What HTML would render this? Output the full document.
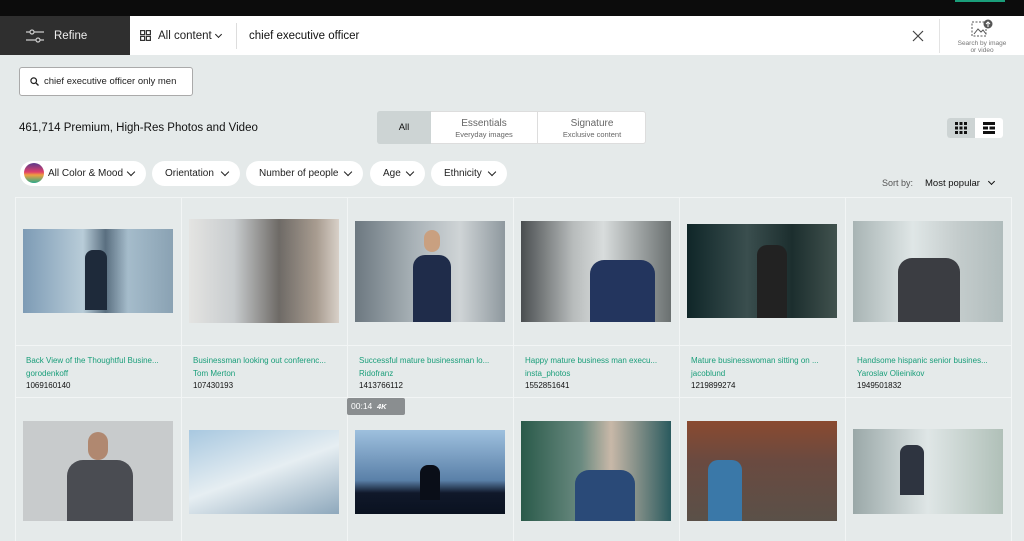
<!DOCTYPE html><html><head><style>
*{margin:0;padding:0;box-sizing:border-box}
body{width:1024px;height:541px;overflow:hidden;background:#e5eaea;font-family:"Liberation Sans",sans-serif;position:relative;color:#111}
.a{position:absolute}
.pill{position:absolute;top:161px;height:25px;background:#fff;border-radius:13px;font-size:10px;line-height:26px;padding-left:13px;color:#222}
.pill:after{content:"";position:absolute;right:12px;top:8px;width:5px;height:5px;border-right:1.5px solid #222;border-bottom:1.5px solid #222;transform:rotate(45deg)}
.t{position:absolute;font-size:8px;color:#1a9e7a;white-space:nowrap}
.n{position:absolute;font-size:8px;color:#111}
.img{position:absolute}
</style></head><body>
<div class="a" style="left:0;top:0;width:1024px;height:16px;background:#0c0c0c"></div>
<div class="a" style="left:955px;top:0;width:50px;height:2px;background:#1a9e7a"></div>
<div class="a" style="left:0;top:16px;width:1024px;height:39px;background:#fff"></div>
<div class="a" style="left:0;top:16px;width:130px;height:39px;background:#2f2f2f"></div>
<svg class="a" style="left:26px;top:29px" width="18" height="14"><g stroke="#ccc" stroke-width="1.2" fill="none"><line x1="0" y1="3" x2="18" y2="3"/><line x1="0" y1="11" x2="18" y2="11"/><circle cx="6" cy="3" r="2" fill="#2f2f2f"/><circle cx="12" cy="11" r="2" fill="#2f2f2f"/></g></svg>
<div class="a" style="left:54px;top:30px;font-size:11.5px;color:#eee">Refine</div>
<svg class="a" style="left:140px;top:30px" width="11" height="11"><g fill="none" stroke="#333" stroke-width="1.2"><rect x="0.6" y="0.6" width="4" height="4"/><rect x="6.4" y="0.6" width="4" height="4"/><rect x="0.6" y="6.4" width="4" height="4"/><rect x="6.4" y="6.4" width="4" height="4"/></g></svg>
<div class="a" style="left:158px;top:30px;font-size:11.5px;color:#222">All content</div>
<div class="a" style="left:216px;top:32px;width:5px;height:5px;border-right:1.3px solid #222;border-bottom:1.3px solid #222;transform:rotate(45deg)"></div>
<div class="a" style="left:236px;top:23px;width:1px;height:26px;background:#ddd"></div>
<div class="a" style="left:249px;top:30px;font-size:11.5px;color:#111">chief executive officer</div>
<svg class="a" style="left:912px;top:30px" width="12" height="12"><path d="M1 1L11 11M11 1L1 11" stroke="#444" stroke-width="1.2"/></svg>
<div class="a" style="left:939px;top:19px;width:1px;height:34px;background:#e3e3e3"></div>
<svg class="a" style="left:970px;top:19px" width="24" height="22"><rect x="2" y="3" width="14" height="14" fill="none" stroke="#555" stroke-dasharray="2 1.5"/><path d="M4 15l4-5 3 3 2-2 3 4" stroke="#555" fill="none"/><circle cx="18" cy="5" r="4.5" fill="#555"/><path d="M18 8V3M16 5l2-2 2 2" stroke="#fff" fill="none"/></svg>
<div class="a" style="left:950px;top:40px;width:64px;text-align:center;font-size:6.5px;line-height:7px;color:#777">Search by image<br>or video</div>

<div class="a" style="left:19px;top:67px;width:174px;height:29px;border:1px solid #aaa;border-radius:3px;background:#fff"></div>
<svg class="a" style="left:30px;top:77px" width="9" height="9"><circle cx="3.7" cy="3.7" r="2.8" fill="none" stroke="#222" stroke-width="1.2"/><path d="M6 6l2.5 2.5" stroke="#222" stroke-width="1.3"/></svg>
<div class="a" style="left:44px;top:76px;font-size:9.5px;color:#222">chief executive officer only men</div>

<div class="a" style="left:19px;top:122px;font-size:11.5px;color:#111">461,714 Premium, High-Res Photos and Video</div>
<div class="a" style="left:377px;top:111px;width:269px;height:33px;background:#fff;border:1px solid #ddd;border-radius:3px"></div>
<div class="a" style="left:377px;top:111px;width:54px;height:33px;background:#cdd4d4;border-radius:3px 0 0 3px;text-align:center;font-size:9.5px;line-height:34px">All</div>
<div class="a" style="left:537px;top:112px;width:1px;height:31px;background:#ddd"></div>
<div class="a" style="left:431px;top:118px;width:106px;text-align:center;font-size:10px;color:#666;line-height:11px">Essentials<br><span style="font-size:7.5px">Everyday images</span></div>
<div class="a" style="left:538px;top:118px;width:108px;text-align:center;font-size:10px;color:#666;line-height:11px">Signature<br><span style="font-size:7.5px">Exclusive content</span></div>
<div class="a" style="left:947px;top:118px;width:56px;height:20px;background:#fff;border-radius:3px"></div>
<div class="a" style="left:947px;top:118px;width:28px;height:20px;background:#cdd4d4;border-radius:3px 0 0 3px"></div>
<svg class="a" style="left:955px;top:122px" width="12" height="12" fill="#111"><rect x="0" y="0" width="3" height="3"/><rect x="4.5" y="0" width="3" height="3"/><rect x="9" y="0" width="3" height="3"/><rect x="0" y="4.5" width="3" height="3"/><rect x="4.5" y="4.5" width="3" height="3"/><rect x="9" y="4.5" width="3" height="3"/><rect x="0" y="9" width="3" height="3"/><rect x="4.5" y="9" width="3" height="3"/><rect x="9" y="9" width="3" height="3"/></svg>
<svg class="a" style="left:983px;top:122px" width="12" height="12" fill="#111"><rect x="0" y="0" width="12" height="3"/><rect x="0" y="4.5" width="5" height="3"/><rect x="6.5" y="4.5" width="5.5" height="3"/><rect x="0" y="9" width="12" height="3"/></svg>

<div class="pill" style="left:20px;width:126px;padding-left:28px">All Color &amp; Mood</div>
<div class="a" style="left:24px;top:163px;width:20px;height:20px;border-radius:50%;background:linear-gradient(180deg,#5a3a8a,#e0406a 45%,#f0a040 60%,#2aa88a)"></div>
<div class="pill" style="left:152px;width:88px">Orientation</div>
<div class="pill" style="left:246px;width:117px">Number of people</div>
<div class="pill" style="left:370px;width:55px">Age</div>
<div class="pill" style="left:431px;width:76px">Ethnicity</div>
<div class="a" style="left:882px;top:178px;font-size:9px;color:#555">Sort by:</div>
<div class="a" style="left:925px;top:178px;font-size:9.5px;color:#111">Most popular</div>
<div class="a" style="left:989px;top:179px;width:5px;height:5px;border-right:1.4px solid #111;border-bottom:1.4px solid #111;transform:rotate(45deg)"></div>

<div class="a" style="left:15px;top:197px;width:996px;height:1px;background:#f2f5f5"></div>
<div class="a" style="left:15px;top:345px;width:996px;height:1px;background:#f2f5f5"></div>
<div class="a" style="left:15px;top:397px;width:996px;height:1px;background:#f2f5f5"></div>
<div class="a" style="left:15px;top:197px;width:1px;height:344px;background:#f2f5f5"></div>
<div class="a" style="left:181px;top:197px;width:1px;height:344px;background:#f2f5f5"></div>
<div class="a" style="left:347px;top:197px;width:1px;height:344px;background:#f2f5f5"></div>
<div class="a" style="left:513px;top:197px;width:1px;height:344px;background:#f2f5f5"></div>
<div class="a" style="left:679px;top:197px;width:1px;height:344px;background:#f2f5f5"></div>
<div class="a" style="left:845px;top:197px;width:1px;height:344px;background:#f2f5f5"></div>
<div class="a" style="left:1011px;top:197px;width:1px;height:344px;background:#f2f5f5"></div>

<div class="img" style="left:23px;top:229px;width:150px;height:84px;background:linear-gradient(90deg,#7d9bb5,#b8ccd8 40%,#5a6f80 55%,#a5bccb 70%,#8aa2b3)"></div>
<div class="a" style="left:85px;top:250px;width:22px;height:60px;background:#1e2a3a;border-radius:8px 8px 0 0"></div>
<div class="img" style="left:189px;top:219px;width:150px;height:104px;background:linear-gradient(90deg,#e4e4e2,#c8ccce 30%,#6e6a66 60%,#a89c90 85%,#d8d0c8)"></div>
<div class="img" style="left:355px;top:221px;width:150px;height:101px;background:linear-gradient(90deg,#6c7880,#aab3b8 40%,#cfd4d6 70%,#8e989e)"></div>
<div class="a" style="left:413px;top:255px;width:38px;height:67px;background:#1f2c4a;border-radius:12px 12px 0 0"></div>
<div class="a" style="left:424px;top:230px;width:16px;height:22px;background:#c9a080;border-radius:8px"></div>
<div class="img" style="left:521px;top:221px;width:150px;height:101px;background:linear-gradient(90deg,#4a4e50,#b8bcbc 35%,#d8dcdc 55%,#6a7070)"></div>
<div class="a" style="left:590px;top:260px;width:65px;height:62px;background:#23355e;border-radius:14px 14px 0 0"></div>
<div class="img" style="left:687px;top:224px;width:150px;height:94px;background:linear-gradient(90deg,#0f2628,#3a4e4e 40%,#1c2e2e 70%,#41524e)"></div>
<div class="a" style="left:757px;top:245px;width:30px;height:73px;background:#222;border-radius:10px 10px 0 0"></div>
<div class="img" style="left:853px;top:221px;width:150px;height:101px;background:linear-gradient(90deg,#a8b4b4,#dfe6e6 40%,#c4cccc 70%,#b0bcbc)"></div>
<div class="a" style="left:898px;top:258px;width:62px;height:64px;background:#3b3d42;border-radius:14px 14px 0 0"></div>

<div class="t" style="left:26px;top:356px">Back View of the Thoughtful Busine...</div><div class="t" style="left:26px;top:369px">gorodenkoff</div><div class="n" style="left:26px;top:381px">1069160140</div>
<div class="t" style="left:193px;top:356px">Businessman looking out conferenc...</div><div class="t" style="left:193px;top:369px">Tom Merton</div><div class="n" style="left:193px;top:381px">107430193</div>
<div class="t" style="left:359px;top:356px">Successful mature businessman lo...</div><div class="t" style="left:359px;top:369px">Ridofranz</div><div class="n" style="left:359px;top:381px">1413766112</div>
<div class="t" style="left:525px;top:356px">Happy mature business man execu...</div><div class="t" style="left:525px;top:369px">insta_photos</div><div class="n" style="left:525px;top:381px">1552851641</div>
<div class="t" style="left:691px;top:356px">Mature businesswoman sitting on ...</div><div class="t" style="left:691px;top:369px">jacoblund</div><div class="n" style="left:691px;top:381px">1219899274</div>
<div class="t" style="left:857px;top:356px">Handsome hispanic senior busines...</div><div class="t" style="left:857px;top:369px">Yaroslav Olieinikov</div><div class="n" style="left:857px;top:381px">1949501832</div>

<div class="a" style="left:347px;top:398px;width:58px;height:17px;background:#8a8e90;border-radius:2px;color:#fff;font-size:8.5px;line-height:17px;padding-left:4px">00:14 &nbsp;<b style="font-style:italic;font-size:7.5px">4K</b></div>

<div class="img" style="left:23px;top:421px;width:150px;height:100px;background:#c8cbcc"></div>
<div class="a" style="left:67px;top:460px;width:66px;height:61px;background:#4a4c52;border-radius:16px 16px 0 0"></div>
<div class="a" style="left:88px;top:432px;width:20px;height:28px;background:#b08870;border-radius:10px"></div>
<div class="img" style="left:189px;top:430px;width:150px;height:84px;background:linear-gradient(160deg,#a8c8e0,#e6eef2 50%,#8ea8bc)"></div>
<div class="img" style="left:355px;top:430px;width:150px;height:84px;background:linear-gradient(180deg,#9ec0de,#5a80a8 60%,#10182a 75%,#0a1220)"></div>
<div class="a" style="left:420px;top:465px;width:20px;height:35px;background:#0a0e18;border-radius:8px 8px 0 0"></div>
<div class="img" style="left:521px;top:421px;width:150px;height:100px;background:linear-gradient(90deg,#2a5a4a,#6a8a80 40%,#c8b8a8 60%,#2a5a5e)"></div>
<div class="a" style="left:575px;top:470px;width:60px;height:51px;background:#2a4a78;border-radius:14px 14px 0 0"></div>
<div class="img" style="left:687px;top:421px;width:150px;height:100px;background:linear-gradient(180deg,#8a4a30,#6a4a40 40%,#5a5048)"></div>
<div class="a" style="left:708px;top:460px;width:34px;height:61px;background:#3a78a8;border-radius:10px 10px 0 0"></div>
<div class="img" style="left:853px;top:429px;width:150px;height:85px;background:linear-gradient(90deg,#9aa8a8,#dfe6e6 50%,#b0c0b8)"></div>
<div class="a" style="left:900px;top:445px;width:24px;height:50px;background:#2e3440;border-radius:8px 8px 0 0"></div>
</body></html>
